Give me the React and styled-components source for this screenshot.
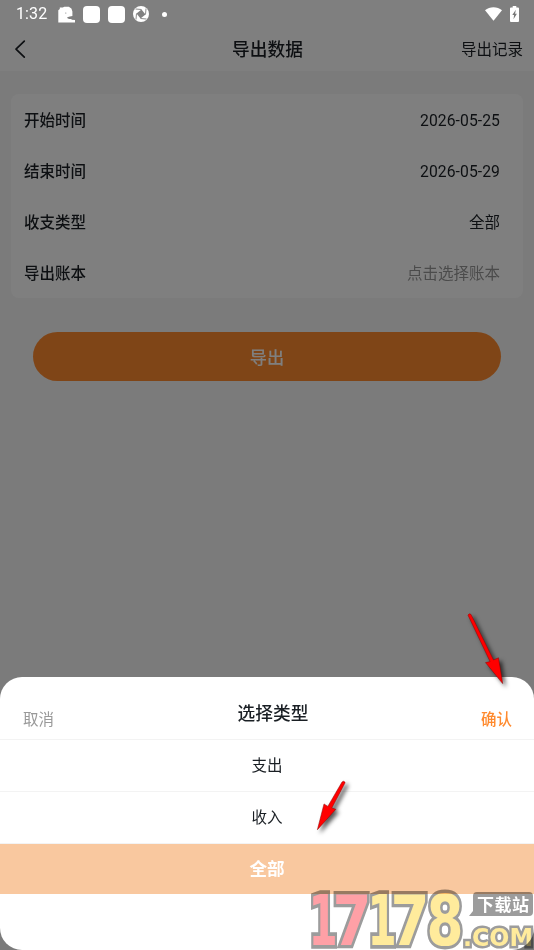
import React from 'react';
import styled, { createGlobalStyle } from 'styled-components';

const GlobalStyle = createGlobalStyle`
  * {
    box-sizing: border-box;
  }

  body {
    margin: 0;
    background: #f7f7f7;
    font-family: Roboto, "Noto Sans CJK SC", sans-serif;
    color: #1a1f24;
  }
`;

const Phone = styled.div`
  position: relative;
  width: 534px;
  height: 950px;
  overflow: hidden;
  background: #f7f7f7;
`;

const TopBar = styled.header`
  height: 71px;
  padding: 28px 11px 0 12px;
  display: grid;
  grid-template-columns: 1fr auto 1fr;
  align-items: center;
  background: #ffffff;

  svg {
    margin-bottom: 2px;
  }
`;

const PageTitle = styled.h1`
  margin: 1px 0 0;
  font-size: 17.7px;
  line-height: 24px;
  font-weight: 500;
`;

const RecordLink = styled.span`
  justify-self: end;
  font-size: 15.5px;
  line-height: 22px;
`;

const Card = styled.section`
  height: 204px;
  margin: 23px 11px 0;
  padding: 0 23px 0 13px;
  border-radius: 8px;
  background: #ffffff;
`;

const Field = styled.div`
  height: 51.2px;
  padding-bottom: 2px;
  display: flex;
  align-items: center;
  justify-content: space-between;
  font-size: 15.5px;
`;

const FieldLabel = styled.span`
  font-weight: 500;
`;

const FieldValue = styled.span`
  color: ${(props) => (props.$empty ? '#969696' : '#1a1f24')};
`;

const DateValue = styled(FieldValue)`
  padding-top: 3px;
  font-size: 15.7px;
  letter-spacing: 0.08px;
`;

const ExportButton = styled.button`
  display: block;
  width: 468px;
  height: 49px;
  margin: 34px auto 0;
  padding: 0 0 1px;
  border: 0;
  border-radius: 25px;
  background: #ff8a2e;
  color: #ffffff;
  font-family: inherit;
  font-size: 17.2px;
  font-weight: 500;
`;

const Scrim = styled.div`
  position: absolute;
  inset: 0;
  background: rgba(0, 0, 0, 0.5);
`;

const StatusBar = styled.div`
  position: absolute;
  top: 0;
  left: 0;
  width: 100%;
  height: 28px;
  padding: 0 15px 0 16px;
  display: flex;
  align-items: center;
  color: #ffffff;
`;

const Clock = styled.span`
  width: 42px;
  font-size: 16px;
  line-height: 28px;
  font-weight: 400;
  letter-spacing: 0.1px;
`;

const StatusIcons = styled.div`
  display: flex;
  align-items: center;
  gap: 8px;
  margin-left: ${(props) => (props.$right ? 'auto' : '0')};

  svg {
    display: block;
  }
`;

const AppSquare = styled.i`
  width: 17px;
  height: 17px;
  border-radius: 4px;
  background: #ffffff;
`;

const Dot = styled.i`
  width: 5px;
  height: 5px;
  margin-left: 5px;
  border-radius: 50%;
  background: #ffffff;
`;

const Sheet = styled.section`
  position: absolute;
  right: 0;
  bottom: 0;
  left: 0;
  height: 273px;
  border-radius: 22px;
  background: #ffffff;
`;

const SheetHead = styled.div`
  height: 63px;
  padding: 0 22px 0 23px;
  display: flex;
  justify-content: space-between;
  border-bottom: 1px solid #f3f3f3;
`;

const SheetTitle = styled.h2`
  margin: 25px 0 0 11px;
  font-size: 17.7px;
  line-height: 24px;
  font-weight: 500;
`;

const SheetAction = styled.span`
  margin-top: 32px;
  font-size: 15.5px;
  line-height: 22px;
  font-weight: ${(props) => (props.$confirm ? 500 : 400)};
  color: ${(props) => (props.$confirm ? '#ff8a2e' : '#999999')};
`;

const Option = styled.div`
  height: ${(props) => (props.$active ? '50px' : '52px')};
  padding-bottom: 3px;
  display: flex;
  align-items: center;
  justify-content: center;
  border-bottom: ${(props) => (props.$active ? '0' : '1px solid #f3f3f3')};
  background: ${(props) => (props.$active ? '#f9c89f' : 'transparent')};
  color: ${(props) => (props.$active ? '#ffffff' : '#1a1f24')};
  font-size: ${(props) => (props.$active ? '17.6px' : '15.5px')};
  font-weight: ${(props) => (props.$active ? 700 : 400)};
`;

const Overlay = styled.svg`
  position: absolute;
  top: 0;
  left: 0;
  pointer-events: none;
  mix-blend-mode: ${(props) => (props.$blend ? 'multiply' : 'normal')};
`;

const Arrow = styled.g`
  fill: #ff0000;
  stroke: #8c0000;
  stroke-width: 0.5;
  filter: drop-shadow(3px 3px 2px rgba(0, 0, 0, 0.65));
`;

const MarkText = styled.text`
  font-family: "DejaVu Sans", sans-serif;
  font-weight: 700;
  fill: ${(props) => props.$fill};
  stroke: #9c9c9c;
  stroke-width: ${(props) => props.$stroke}px;
  vector-effect: non-scaling-stroke;
  paint-order: stroke;
  stroke-linejoin: miter;
  stroke-miterlimit: 2;
`;

const BubbleText = styled.text`
  font-family: "Noto Sans CJK SC", sans-serif;
  font-size: 17px;
  font-weight: 700;
  fill: #ffffff;
`;

const fields = [
  { label: '开始时间', value: '2026-05-25', date: true },
  { label: '结束时间', value: '2026-05-29', date: true },
  { label: '收支类型', value: '全部' },
  { label: '导出账本', value: '点击选择账本', empty: true },
];

const options = ['支出', '收入', '全部'];

const digits = [
  { char: '1', center: 323, scale: 0.6, fill: '#ffa0a6' },
  { char: '7', center: 352, scale: 0.8, fill: '#ffa0a6' },
  { char: '1', center: 382, scale: 0.6, fill: '#ffeb9c' },
  { char: '7', center: 410, scale: 0.8, fill: '#ffeb9c' },
  { char: '8', center: 445, scale: 0.76, fill: '#ffeb9c' },
];

function BackIcon() {
  return (
    <svg width="14" height="20" viewBox="0 0 14 20" fill="none" stroke="#1a1f24" strokeWidth="1.7" strokeLinecap="round" strokeLinejoin="round">
      <path d="M12.3 2.2 4 10.2l8.3 8" />
    </svg>
  );
}

function DinoIcon() {
  return (
    <svg width="17" height="17" viewBox="0 0 17 17">
      <path fill="#fff" d="M.3 16.500V4.200L1.800 3V1.500h3L6.300.7h4.500l2.600 1.800 1 3v4.600l-2.600.3-2.600.8.3 1 1.600.8 2.400.1v.6l3.700.3v2.500z" />
      <circle cx="7.800" cy="7" r=".6" fill="#808080" />
    </svg>
  );
}

function ShutterIcon() {
  return (
    <svg width="16" height="16" viewBox="0 0 16 16">
      <circle cx="8" cy="8" r="8" fill="#fff" />
      <path fill="#808080" d="m8.500 3.500 4 5-5 4-4-5z" />
      <path d="M8.500 3.500 2.500 3M12.500 8.500l.5-6M7.500 12.500l6 .5M3.500 7.500l-.5 6" stroke="#808080" strokeWidth=".9" />
    </svg>
  );
}

function Digit({ char, center, scale, fill }) {
  return (
    <g transform={`translate(${center} 945) scale(${scale} 1)`}>
      <MarkText $fill={fill} $stroke={6} x="0" y="0" fontSize="70" textAnchor="middle">{char}</MarkText>
    </g>
  );
}

function Watermark() {
  return (
    <Overlay $blend width="534" height="950" viewBox="0 0 534 950">
      {digits.map((d) => (
        <Digit key={d.center} {...d} />
      ))}
      <path d="M477 892h52q4 0 4 4v16q0 4-4 4h-60l4-5v-15q0-4 4-4z" fill="#9c9c9c" />
      <MarkText $fill="#ffeb9c" $stroke={5} x="463" y="946" fontSize="25.500" textLength="70" lengthAdjust="spacingAndGlyphs">.COM</MarkText>
    </Overlay>
  );
}

export default function App() {
  return (
    <Phone>
      <GlobalStyle />
      <TopBar>
        <BackIcon />
        <PageTitle>导出数据</PageTitle>
        <RecordLink>导出记录</RecordLink>
      </TopBar>
      <Card>
        {fields.map((f) => (
          <Field key={f.label}>
            <FieldLabel>{f.label}</FieldLabel>
            {f.date ? <DateValue>{f.value}</DateValue> : <FieldValue $empty={f.empty}>{f.value}</FieldValue>}
          </Field>
        ))}
      </Card>
      <ExportButton>导出</ExportButton>

      <Scrim />

      <StatusBar>
        <Clock>1:32</Clock>
        <StatusIcons>
          <DinoIcon />
          <AppSquare />
          <AppSquare />
          <ShutterIcon />
          <Dot />
        </StatusIcons>
        <StatusIcons $right>
          <svg width="17" height="14" viewBox="0 0 17 14">
            <path fill="#fff" d="M0 3.2C4.7-.9 12.3-.9 17 3.2L8.5 13.8z" />
          </svg>
          <svg width="9" height="16" viewBox="0 0 9 16">
            <path fill="#fff" d="M2.7 0h3.6v1.5H8q1 0 1 1V15q0 1-1 1H1q-1 0-1-1V2.500q0-1 1-1h1.700z" />
            <path fill="#777" d="M5.800 3.700 2.300 9h1.800l-.6 4.200L6.900 7.800H5.100z" />
          </svg>
        </StatusIcons>
      </StatusBar>

      <Sheet>
        <SheetHead>
          <SheetAction>取消</SheetAction>
          <SheetTitle>选择类型</SheetTitle>
          <SheetAction $confirm>确认</SheetAction>
        </SheetHead>
        {options.map((name) => (
          <Option key={name} $active={name === '全部'}>{name}</Option>
        ))}
      </Sheet>

      <Overlay width="534" height="950" viewBox="0 0 534 950">
        <Arrow>
          <path d="M468 615.200q1-2.400 3-.8L493.500 660l5-2.200 4.200 25.800-17.200-21 4.600-1z" />
          <path d="M342 782q1.800-1.800 3.200.6L331.800 808l4 1.300-18.400 20.400 6.600-25.800 3.800 2.500z" />
        </Arrow>
      </Overlay>
      <Watermark />
      <Overlay width="534" height="950" viewBox="0 0 534 950">
        <BubbleText x="477" y="911" textLength="52">下载站</BubbleText>
      </Overlay>
    </Phone>
  );
}
